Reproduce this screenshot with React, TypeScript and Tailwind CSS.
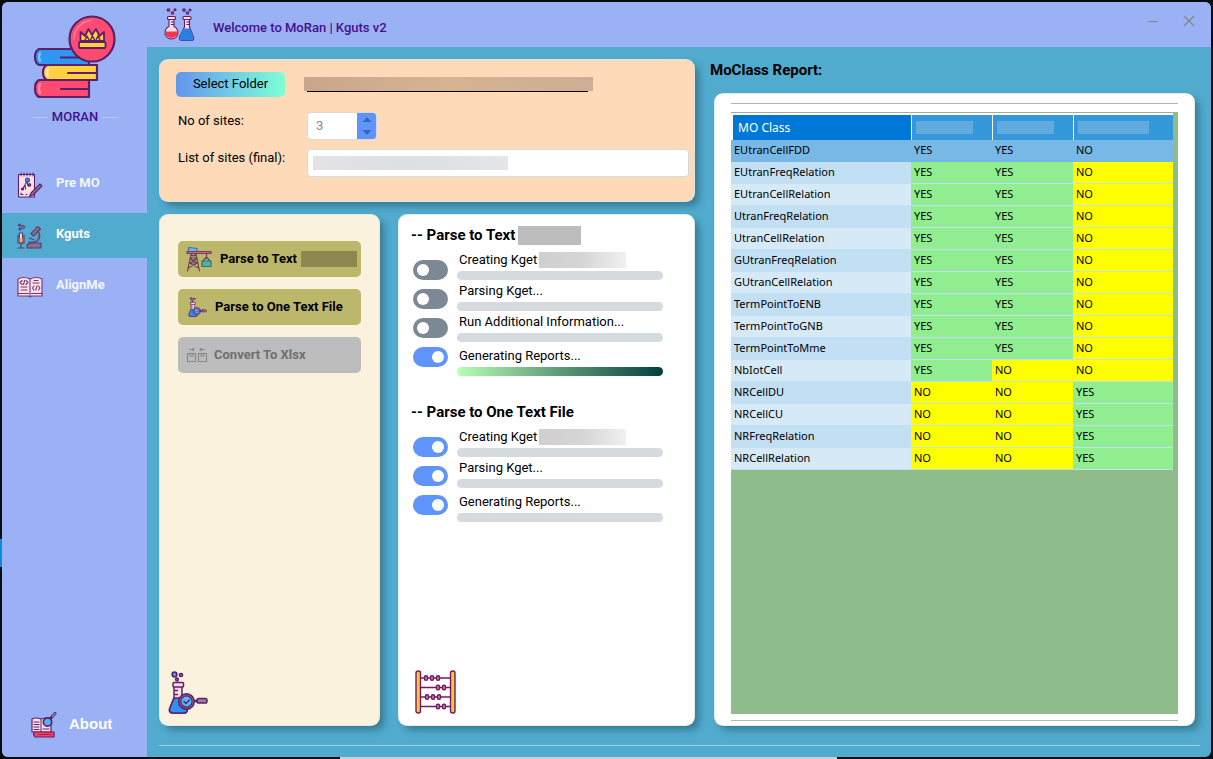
import React from "react";

const INK = "#5c2068";

function LogoIcon() {
  return (
    <svg viewBox="0 0 84 84" className="h-[84px] w-[84px]" aria-hidden="true" stroke={INK} strokeWidth="2.2" strokeLinejoin="round" strokeLinecap="round">
      <path d="M6 35H56V51H6Q2 49 2 43T6 35Z" fill="#2f96f3" />
      <path d="M14 51H64V66H14Q10 64 10 58.500T14 51Z" fill="#ffd140" />
      <path d="M6 66H56V83H6Q2 81 2 74.500T6 66Z" fill="#ff4a72" />
      <path d="M7 39Q5 43 7 47" stroke="#7cc4ff" fill="none" />
      <path d="M15 55Q13 58.500 15 62" stroke="#fff0a8" fill="none" />
      <path d="M7 70Q5 74.500 7 79" stroke="#ff8fa8" fill="none" />
      <path d="M28 43.500H56M35 59H64M28 75H56" fill="none" />
      <circle cx="59" cy="25" r="22.500" fill="#ff4a72" />
      <path d="M41 25A18.500 18.500 0 0 1 58 6.500" stroke="#ff8299" fill="none" strokeWidth="1.500" />
      <path d="M47.500 27V18L52 22L55.500 15L59 21L63 15L66.500 22L71 18V27Z" fill="#ffd140" strokeWidth="1.800" />
      <path d="M52 26L54 22L56 26M57.500 26L59.500 22L61.500 26M63 26L65 22L67 26" fill="none" strokeWidth="1.400" />
      <rect x="46" y="28" width="26.500" height="6" rx="1" fill="#ffd140" strokeWidth="1.800" />
    </svg>
  );
}

function FlasksIcon() {
  return (
    <svg viewBox="0 0 32 34" className="h-[34px] w-8" aria-hidden="true" stroke={INK} strokeWidth="1.100" strokeLinejoin="round">
      <path d="M6 11V18.500A6.500 6.500 0 1 0 11 18.500V11Z" fill="#ffd9e4" />
      <path d="M2 23.500H15A6.500 6.500 0 1 1 2 23.500Z" fill="#f5344f" stroke="none" />
      <rect x="4.500" y="8.500" width="8" height="3" rx="1" fill="#ffd9e4" />
      <path d="M8 14H11M8 16.500H11" />
      <path d="M21.500 11V19L16.500 29Q16 32.500 19 32.500H28.500Q31.500 32 30.500 29L26.500 19V11Z" fill="#ffd9e4" />
      <path d="M20.500 20.500H27L30.500 29Q31 32 28.500 32.500H19Q16 32 16.500 29Z" fill="#2b7fe0" stroke="none" />
      <rect x="20" y="8.500" width="8" height="3" rx="1" fill="#ffd9e4" />
      <path d="M23.500 14H26.500M23.500 16.500H26.500" />
      <circle cx="5.500" cy="2" r="1.300" fill="#f5344f" /><circle cx="9.500" cy="5" r="1.200" fill="#f5344f" /><circle cx="12" cy="1.700" r="1" fill="#f5344f" />
      <circle cx="21" cy="2" r="1.300" fill="#2b7fe0" /><circle cx="24.500" cy="5" r="1.200" fill="#2b7fe0" /><circle cx="27" cy="2" r="1" fill="#2b7fe0" />
    </svg>
  );
}

function NotepadIcon() {
  return (
    <svg viewBox="0 0 26 26" className="h-[26px] w-[26px]" aria-hidden="true" stroke={INK} strokeWidth="1.100" strokeLinejoin="round" strokeLinecap="round" fill="none">
      <rect x="1.500" y="2.500" width="16" height="22.500" fill="#ffdfe8" />
      <path d="M4 1V4M7 1V4M10 1V4M13 1V4M16 1V4" strokeWidth="1" />
      <path d="M10 9L11 14M10 9L8 13L5.500 17M8 13L8.500 17M11 14L13 12" />
      <circle cx="10.500" cy="8" r="2" fill="#3d8fe8" stroke="#3a4a9a" />
      <circle cx="5.500" cy="17" r="1" fill={INK} /><circle cx="12.500" cy="13" r="1.200" fill="#b04868" />
      <path d="M4 21V22.500H6M9 22.500H10" />
      <path d="M23 12L25 14L16 23L12.500 24.500L14 21Z" fill="#8d7191" />
    </svg>
  );
}

function MicroscopeIcon() {
  return (
    <svg viewBox="0 0 26 26" className="h-[26px] w-[26px]" aria-hidden="true" stroke="#5b386f" strokeWidth="1.100" strokeLinejoin="round" strokeLinecap="round" fill="none">
      <circle cx="2.500" cy="2" r="1" fill="#3d8fe8" /><circle cx="6" cy="4" r="1.400" fill="#79a6d4" /><circle cx="3" cy="6" r="1" />
      <path d="M2.500 10H5.500V19L4 21L2.500 19Z" fill="#ffdfe8" />
      <path d="M2.500 15H5.500V19L4 20.500L2.500 19Z" fill="#ffb03b" stroke="none" />
      <path d="M1 12V20H7V12M1 25H7M4 21V25" />
      <path d="M14 10.500L20.500 3.500L23.500 6L16.500 13Z" fill="#7f7390" />
      <path d="M21 8Q24 12 22 16Q20 19 17 19H12V21H19" fill="#7f7390" />
      <path d="M10 25V22Q12 20 15 20H24V25Z" fill="#7f7390" />
      <path d="M12.500 15L17 17" />
    </svg>
  );
}

function CodeBookIcon() {
  return (
    <svg viewBox="0 0 26 22" className="h-[22px] w-[26px]" aria-hidden="true" stroke="#6b3a72" strokeWidth="1.100" strokeLinejoin="round" strokeLinecap="round" fill="none">
      <path d="M1 3Q6 0 13 3Q20 0 25 3V20H14.500L13 21L11.500 20H1Z" fill="#ffdfe8" />
      <path d="M13 3V20M1 17.500H11.500M14.500 17.500H25" />
      <path d="M5 4.500L3 6.500L5 8.500M9 4.500L11 6.500L9 8.500M7.600 4.500L6.500 8.500" />
      <path d="M17 10L15.500 12L17 14M21.500 10L23 12L21.500 14M20 10L18.800 14" />
      <path d="M4 11H10M4 14H10M17 4.500H21M16 7H22" />
    </svg>
  );
}

function AboutIcon() {
  return (
    <svg viewBox="0 0 26 26" className="h-[26px] w-[26px]" aria-hidden="true" stroke={INK} strokeWidth="1.200" strokeLinejoin="round" strokeLinecap="round" fill="none">
      <path d="M1 7Q5 5 10 7Q15 5 20 7V20H1Z" fill="#ffdfe8" />
      <path d="M10 7V20M3 10H8M3 12.500H8M3 15H8M3 17.500H8M12 17H18" strokeWidth="1" />
      <path d="M3 20H23V25H4Q2 22.500 3 20Z" fill="#ff3f62" />
      <path d="M7 22.500H20" stroke="#a5244f" />
      <path d="M19.500 6.500L24 1.500" strokeWidth="3" />
      <path d="M21.500 4.500L24 1.500" stroke="#8d9aa8" strokeWidth="1.200" />
      <circle cx="16.500" cy="10" r="4.200" fill="#4fb3f5" strokeWidth="1.700" />
    </svg>
  );
}

function CraneIcon() {
  return (
    <svg viewBox="0 0 26 26" className="h-[26px] w-[26px]" aria-hidden="true" stroke="#70435f" strokeWidth="1.200" strokeLinejoin="round" strokeLinecap="round" fill="none">
      <path d="M3 1.500L11 2.500V5.500H2Z" fill="#72b9f2" stroke="#3a6fb5" />
      <path d="M1 5.500H25V7.500H1Z" fill="#d0687c" />
      <path d="M5 8L1.500 25M10 8L13.500 25M5 8L11 13L3.500 17L12.500 22M10 8L4 13L11.500 17L2.500 22M4 13H11M3.300 17H11.700" />
      <path d="M20.500 8V11M20.500 11L17 15M20.500 11L24 15" />
      <rect x="16" y="15" width="9" height="5.500" fill="#41b9ae" stroke="#356d78" />
    </svg>
  );
}

function FlaskSearchIcon({ className }: { className: string }) {
  return (
    <svg viewBox="0 0 40 43" className={className} aria-hidden="true" stroke={INK} strokeWidth="1.500" strokeLinejoin="round" strokeLinecap="round" fill="none">
      <path d="M6 15V27L1.500 38Q1 41.500 4 42H17Q20 41 19 38L14 27V15Z" fill="#ffd9e4" />
      <path d="M6 27H14L19 38Q20 41 17 42H4Q1 41 1.500 38Z" fill="#2f8ff2" />
      <rect x="5" y="11.500" width="10.500" height="4.500" rx="1" fill="#ffd9e4" />
      <path d="M7 19.500H9.500M7 23.500H9.500" strokeWidth="1.300" />
      <circle cx="6.500" cy="3.500" r="2.400" fill="#3d9df5" /><circle cx="13" cy="4" r="1.600" fill="#3d9df5" /><circle cx="9" cy="8.500" r="1.400" fill="#c45b86" />
      <path d="M26 30H30" strokeWidth="2.500" />
      <rect x="29" y="27.500" width="10" height="4.500" rx="1.800" fill="#928098" />
      <circle cx="18.500" cy="30.500" r="7.800" fill="#8b6d90" />
      <circle cx="18.500" cy="30.500" r="5.600" fill="#55b6fa" strokeWidth="1.200" />
      <path d="M16 30.500L18 32.500L21.500 29" strokeWidth="1.400" />
    </svg>
  );
}

function ConvertIcon() {
  return (
    <svg viewBox="0 0 22 16" className="h-4 w-[22px]" aria-hidden="true" stroke="#888888" strokeWidth="1.100" fill="none" strokeLinejoin="round">
      <path d="M3 2.500H8M6.500 1L8 2.500L6.500 4M19 2.500H14M15.500 1L14 2.500L15.500 4" />
      <path d="M1.500 6.500H9.500V14.500H1.500ZM12.500 6.500H20.500V14.500H12.500Z" />
      <path d="M4 6.500V9H7V6.500M15 6.500V9H18V6.500" />
    </svg>
  );
}

function AbacusIcon() {
  const rods: [number, number[]][] = [
    [8, [11, 17, 23]],
    [17.5, [23, 29]],
    [27, [12, 18, 24]],
    [36.5, [23, 29]],
  ];
  return (
    <svg viewBox="0 0 41 44" className="h-11 w-[41px]" aria-hidden="true" stroke="#74195f" strokeWidth="1.400" fill="none">
      {rods.map(([y, beads]) => (
        <g key={y}>
          <path d={`M4 ${y}H37`} />
          {beads.map((x) => (
            <rect key={x} x={x - 1.5} y={y - 2.3} width="3" height="4.600" rx="1.300" fill="#c98ab5" />
          ))}
        </g>
      ))}
      <rect x="1" y="1" width="4.500" height="42" rx="2" fill="#f7c83d" />
      <rect x="35.500" y="1" width="4.500" height="42" rx="2" fill="#f7c83d" />
    </svg>
  );
}

function NavItem({ label, icon, active = false }: { label: string; icon: React.ReactNode; active?: boolean }) {
  return (
    <a
      href="#"
      aria-current={active ? "page" : undefined}
      className={`flex h-[45px] items-center gap-[13px] pl-[15px] text-[13px] font-bold ${active ? "bg-[#50abce] text-white" : "text-[#f3f6ff]"}`}
    >
      {icon}
      <span className="pb-1">{label}</span>
    </a>
  );
}

type Step = { label: string; on: boolean; masked?: boolean; done?: boolean };

function StepGroup({ title, masked = false, steps }: { title: string; masked?: boolean; steps: Step[] }) {
  const prefix = title.replace(/\s+/g, "-");
  return (
    <section>
      <h2 className="flex h-5 items-center gap-[3px] text-[15px] font-bold">
        -- {title}
        {masked && <span className="h-[19px] w-[63px] bg-[#bdbdbd]" />}
      </h2>
      <div className="mt-[6px] flex gap-[9px] pl-[2px]">
        <div className="flex flex-col gap-[9px] pt-[9px]">
          {steps.map((s, i) => (
            <input
              key={s.label}
              id={`${prefix}-${i}`}
              type="checkbox"
              defaultChecked={s.on}
              className="block h-5 w-[35px] appearance-none rounded-full bg-[#7c8894] p-1 before:block before:size-3 before:rounded-full before:bg-white checked:bg-[#5e94fb] checked:before:ml-[15px]"
            />
          ))}
        </div>
        <div className="mr-[31px] flex flex-1 flex-col gap-[2px]">
          {steps.map((s, i) => (
            <div key={s.label} className="flex flex-col gap-[2px] last:mt-[3px]">
              <label htmlFor={`${prefix}-${i}`} className="flex h-[18px] items-center gap-[2px] pl-[2px] text-[13px] leading-[18px]">
                {s.label}
                {s.masked && <span className="h-4 w-[87px] bg-linear-to-r from-[#d0cece] via-[#d6d5d5] to-[#f0f0f0]" />}
              </label>
              <div className={`h-[9px] rounded-full ${s.done ? "bg-linear-to-r from-[#b9ffb4] to-[#004040]" : "bg-[#d5dadf]"}`} />
            </div>
          ))}
        </div>
      </div>
    </section>
  );
}

const ROWS: [string, string][] = [
  ["EUtranCellFDD", "YYN"],
  ["EUtranFreqRelation", "YYN"],
  ["EUtranCellRelation", "YYN"],
  ["UtranFreqRelation", "YYN"],
  ["UtranCellRelation", "YYN"],
  ["GUtranFreqRelation", "YYN"],
  ["GUtranCellRelation", "YYN"],
  ["TermPointToENB", "YYN"],
  ["TermPointToGNB", "YYN"],
  ["TermPointToMme", "YYN"],
  ["NbIotCell", "YNN"],
  ["NRCellDU", "NNY"],
  ["NRCellCU", "NNY"],
  ["NRFreqRelation", "NNY"],
  ["NRCellRelation", "NNY"],
];

function ReportTable() {
  return (
    <table className="w-full table-fixed border-separate border-spacing-0 font-['Noto_Sans',sans-serif] text-[11px]">
      <colgroup>
        <col className="w-[180px]" />
        <col className="w-[81px]" />
        <col className="w-[81px]" />
        <col />
      </colgroup>
      <thead>
        <tr className="h-[27px] text-left text-white">
          <th className="border-t-2 border-l-2 border-white bg-[#0078d7] pl-[5px] text-[12px] font-normal">MO Class</th>
          {["w-[57px]", "w-[57px]", "w-[71px]"].map((w, i) => (
            <th key={i} aria-label={`Site ${i + 1}`} className="border-t-2 border-l border-white bg-[#3498db] pl-1">
              <span className={`block h-[13px] bg-[#5fabe0] ${w}`} />
            </th>
          ))}
        </tr>
      </thead>
      <tbody>
        {ROWS.map(([name, marks], r) => {
          const line = r === 0 ? "border-[#78b8e6]" : "border-[#c3dff3]";
          return (
            <tr key={name} className="h-[22px]">
              <td className={`border-b p-0 pl-[3px] ${line} ${r === 0 ? "bg-[#78b8e6]" : r % 2 ? "bg-[#c2dff3]" : "bg-[#d6e9f7]"}`}>{name}</td>
              {marks.split("").map((m, c) => (
                <td key={c} className={`border-b p-0 pl-[3px] ${line} ${r === 0 ? "bg-[#78b8e6]" : m === "Y" ? "bg-[#90ee90]" : "bg-[#ffff00]"}`}>
                  {m === "Y" ? "YES" : "NO"}
                </td>
              ))}
            </tr>
          );
        })}
      </tbody>
    </table>
  );
}

const CARD = "rounded-[9px] border border-[#d5e5e5]/70 shadow-[5px_5px_7px_-1px_rgba(20,50,60,0.4)]";
const ACTION = "flex h-9 w-full items-center rounded-[5px] text-left text-[13px] font-bold";

export default function App() {
  return (
    <div className="relative flex min-h-screen bg-[#070b0e] p-[2px] font-['Roboto',sans-serif] text-black">
      <div className="absolute bottom-0 left-[28%] h-[2px] w-[41%] bg-[#c9d0d3]" />
      <div className="absolute top-[539px] left-0 h-7 w-[2px] bg-[#1287d4]" />
      <div className="relative flex flex-1 overflow-hidden rounded-md bg-[#50abce]">
        <aside className="flex w-[145px] shrink-0 flex-col bg-[#9ab1f5] pt-3 pb-[10px]">
          <div className="flex flex-col gap-[11px] pl-[31px]">
            <LogoIcon />
            <div className="flex h-4 w-[84px] items-center gap-1 text-[13px] font-medium text-[#43108a]">
              <span className="h-px flex-1 bg-[#bfc8e2]" />
              MORAN
              <span className="h-px flex-1 bg-[#bfc8e2]" />
            </div>
          </div>
          <nav className="mt-[37px] flex flex-1 flex-col gap-[6px]">
            <NavItem label="Pre MO" icon={<NotepadIcon />} />
            <NavItem label="Kguts" icon={<MicroscopeIcon />} active />
            <NavItem label="AlignMe" icon={<CodeBookIcon />} />
            <a href="#" className="mt-auto flex h-[45px] items-center gap-3 pl-[29px] font-['Liberation_Sans',sans-serif] text-[15px] font-bold text-white">
              <AboutIcon />
              About
            </a>
          </nav>
        </aside>

        <div className="flex min-w-0 flex-1 flex-col">
          <header className="flex h-[45px] shrink-0 items-center bg-[#9ab1f5] px-4">
            <FlasksIcon />
            <h1 className="ml-[18px] flex-1 pt-[7px] text-[13px] font-medium text-[#43108a]">Welcome to MoRan | Kguts v2</h1>
            <div className="flex items-center gap-6 pb-2 text-[#858585]">
              <button type="button" aria-label="Minimize">
                <svg viewBox="0 0 12 12" className="size-3" stroke="currentColor"><path d="M1 6.500H11" /></svg>
              </button>
              <button type="button" aria-label="Close">
                <svg viewBox="0 0 12 12" className="size-3" stroke="currentColor" strokeWidth="1.300"><path d="M1 1L11 11M11 1L1 11" /></svg>
              </button>
            </div>
          </header>

          <main className="flex flex-1 flex-col pt-3 pl-3">
            <div className="grid flex-1 grid-cols-[minmax(0,536fr)_minmax(0,481fr)] gap-[19px] pr-4">
              <div className="flex min-w-0 flex-col gap-3">
                <section className={`grid grid-cols-[127px_1fr] gap-y-[9px] bg-[#ffdab9] pt-3 pr-[5px] pb-[24px] pl-4 text-[13px] ${CARD}`}>
                  <button type="button" className="h-[25px] w-[109px] rounded-[5px] bg-linear-to-r from-[#6495ed] to-[#7fffd4] pb-[2px] text-[13px]">
                    Select Folder
                  </button>
                  <div className="h-[31px] pt-[5px] pl-px">
                    <div className="h-[14px] w-[289px] bg-linear-to-r from-[#c9a68c] via-[#d6b393] to-[#cfad94]" />
                    <div className="ml-[3px] h-px w-[281px] bg-black" />
                  </div>
                  <label htmlFor="count" className="pl-[2px] leading-[18px]">No of sites:</label>
                  <div className="pl-1">
                    <div className="flex h-7 w-[70px] overflow-hidden rounded-[4px] border border-[#d5dadf] bg-white">
                      <input id="count" type="text" inputMode="numeric" defaultValue="3" className="w-[49px] pl-2 text-[13px] text-[#7d8b99] outline-none" />
                      <div className="flex flex-1 flex-col items-center justify-around bg-[#5e94fb] text-[#3b66b5]">
                        <button type="button" aria-label="Increase">
                          <svg viewBox="0 0 10 6" className="h-[6px] w-[10px]" fill="currentColor"><path d="M5 0L9.500 5H.5Z" /></svg>
                        </button>
                        <button type="button" aria-label="Decrease">
                          <svg viewBox="0 0 10 6" className="h-[6px] w-[10px]" fill="currentColor"><path d="M5 5L9.500 0H.5Z" /></svg>
                        </button>
                      </div>
                    </div>
                  </div>
                  <label htmlFor="sites" className="pl-[2px] leading-[18px]">List of sites (final):</label>
                  <div className="grid pl-1">
                    <input id="sites" type="text" className="col-start-1 row-start-1 h-7 w-full rounded-[4px] border border-[#d5dadf] bg-white px-2 outline-none" />
                    <span className="pointer-events-none col-start-1 row-start-1 ml-[6px] h-[14px] w-[195px] self-center bg-linear-to-r from-[#e2e3e5] via-[#dcdfe3] to-[#e4e6e9]" />
                  </div>
                </section>

                <div className="grid flex-1 grid-cols-[minmax(0,221fr)_minmax(0,297fr)] gap-[18px]">
                  <section className={`flex flex-col bg-[#faf2dc] pt-[26px] pb-[11px] ${CARD}`}>
                    <div className="flex flex-1 flex-col gap-3 px-[18px]">
                      <button type="button" className={`${ACTION} gap-2 bg-[#bdb76b] pl-2`}>
                        <CraneIcon />
                        <span className="flex items-center gap-1">
                          Parse to Text
                          <span className="h-4 w-14 bg-[#8c8850]" />
                        </span>
                      </button>
                      <button type="button" className={`${ACTION} gap-2 bg-[#bdb76b] pl-[10px]`}>
                        <FlaskSearchIcon className="h-5 w-[19px]" />
                        Parse to One Text File
                      </button>
                      <button type="button" disabled className={`${ACTION} gap-[6px] bg-[#bcbcbc] pl-2 text-[#6f6f6f]`}>
                        <ConvertIcon />
                        Convert To Xlsx
                      </button>
                    </div>
                    <div className="pl-2">
                      <FlaskSearchIcon className="h-[43px] w-10" />
                    </div>
                  </section>

                  <section className={`flex flex-col gap-[26px] bg-white pt-[10px] pb-[11px] pl-3 ${CARD}`}>
                    <StepGroup
                      title="Parse to Text"
                      masked
                      steps={[
                        { label: "Creating Kget", on: false, masked: true },
                        { label: "Parsing Kget...", on: false },
                        { label: "Run Additional Information...", on: false },
                        { label: "Generating Reports...", on: true, done: true },
                      ]}
                    />
                    <StepGroup
                      title="Parse to One Text File"
                      steps={[
                        { label: "Creating Kget", on: true, masked: true },
                        { label: "Parsing Kget...", on: true },
                        { label: "Generating Reports...", on: true },
                      ]}
                    />
                    <div className="mt-auto pl-1">
                      <AbacusIcon />
                    </div>
                  </section>
                </div>
              </div>

              <div className="-ml-1 flex min-w-0 flex-col">
                <h2 className="h-[34px] pt-px text-[15px] leading-5 font-bold">MoClass Report:</h2>
                <section className={`ml-1 flex flex-1 flex-col bg-white px-4 pt-[9px] pb-1 ${CARD}`}>
                  <hr className="border-[#b5b5b5]" />
                  <div className="mt-2 mb-[6px] flex-1 border-t border-[#a3aba3] bg-[#8fbc8b] pr-[5px]">
                    <ReportTable />
                  </div>
                  <hr className="border-[#b5b5b5]" />
                </section>
              </div>
            </div>
            <hr className="mt-[19px] mr-[11px] mb-[11px] border-[#a9cbd6]" />
          </main>
        </div>
      </div>
    </div>
  );
}
